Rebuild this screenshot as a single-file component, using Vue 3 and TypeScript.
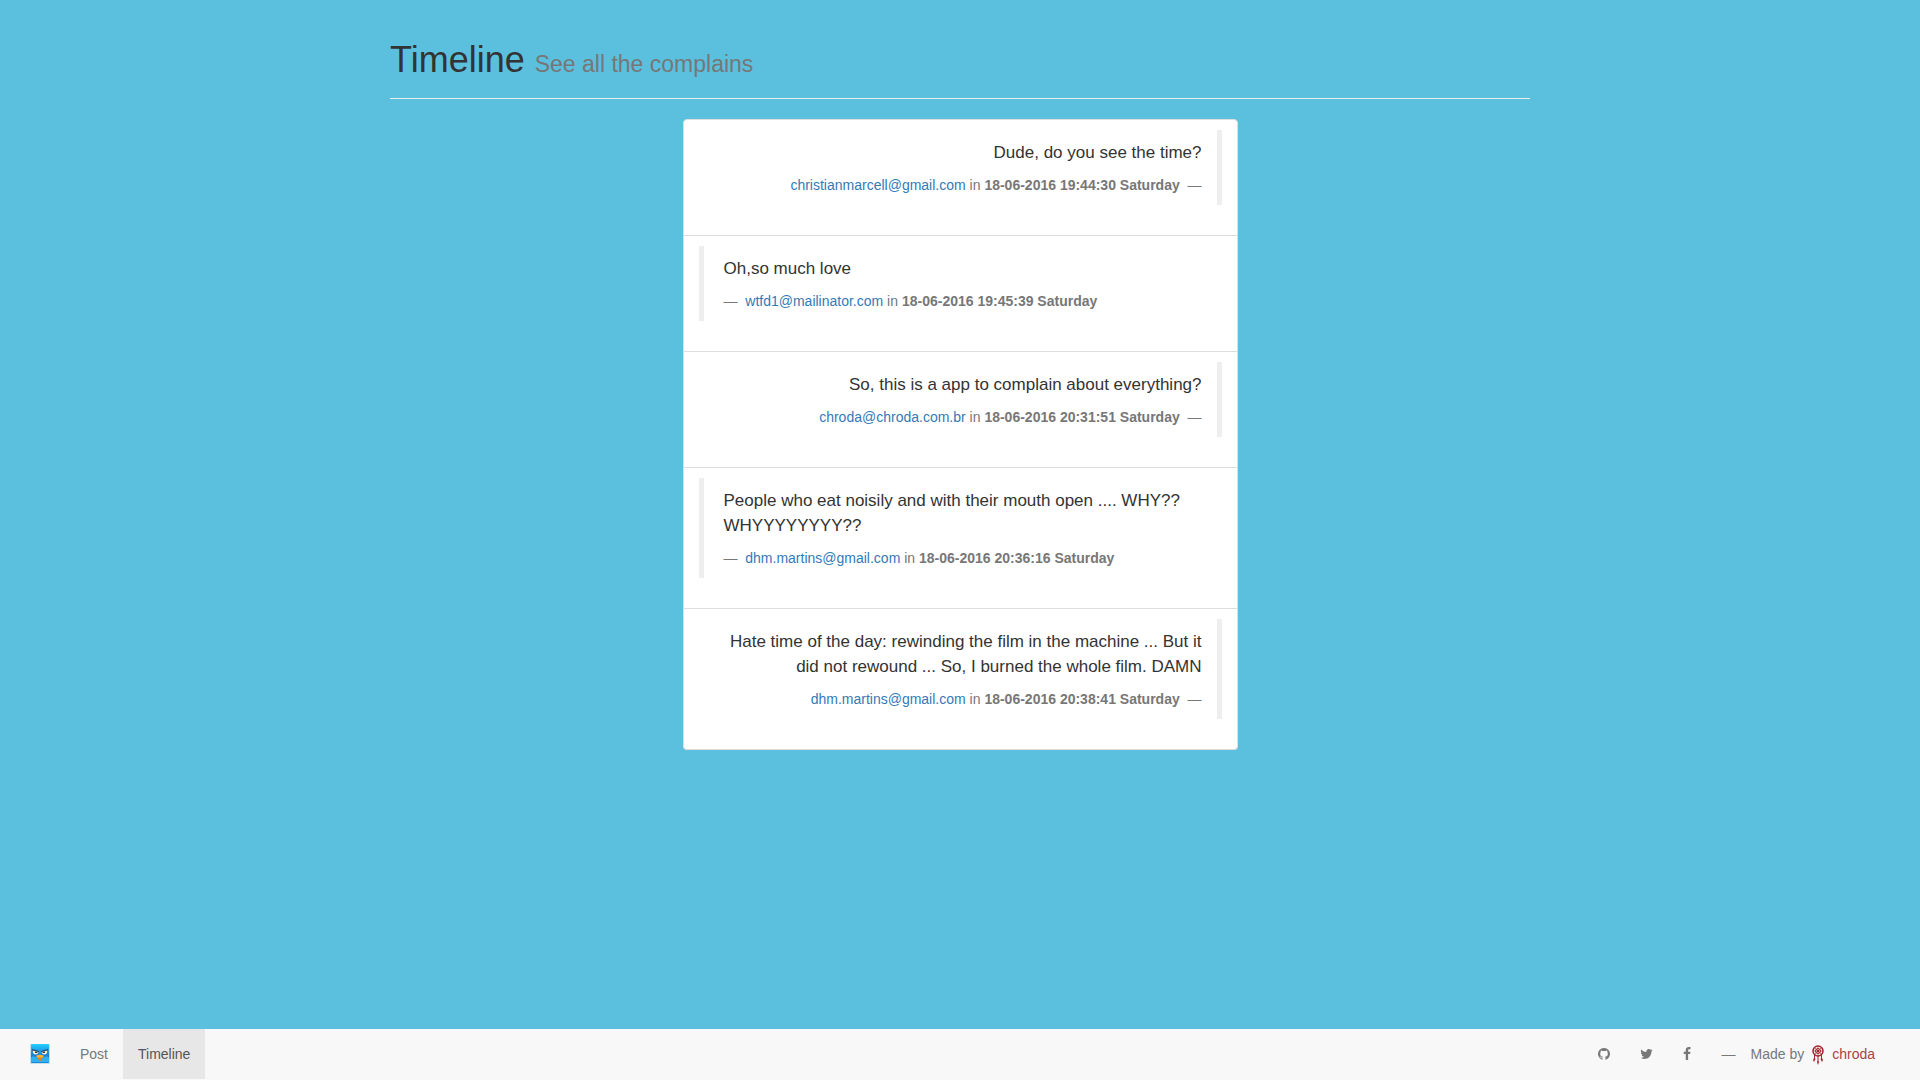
<script setup lang="ts">
interface Complaint {
  text: string
  email: string
  date: string
}

const complaints: Complaint[] = [
  { text: 'Dude, do you see the time?', email: 'christianmarcell@gmail.com', date: '18-06-2016 19:44:30 Saturday' },
  { text: 'Oh,so much love', email: 'wtfd1@mailinator.com', date: '18-06-2016 19:45:39 Saturday' },
  { text: 'So, this is a app to complain about everything?', email: 'chroda@chroda.com.br', date: '18-06-2016 20:31:51 Saturday' },
  { text: 'People who eat noisily and with their mouth open .... WHY?? WHYYYYYYYY??', email: 'dhm.martins@gmail.com', date: '18-06-2016 20:36:16 Saturday' },
  { text: 'Hate time of the day: rewinding the film in the machine ... But it did not rewound ... So, I burned the whole film. DAMN', email: 'dhm.martins@gmail.com', date: '18-06-2016 20:38:41 Saturday' },
]
</script>

<template>
  <div class="page">
    <main class="container">
      <header class="page-header">
        <h1>Timeline <small>See all the complains</small></h1>
      </header>
      <ul class="list">
        <li v-for="(item, i) in complaints" :key="i" class="item">
          <blockquote :class="{ reverse: i % 2 === 0 }">
            <p>{{ item.text }}</p>
            <footer>
              <a :href="'mailto:' + item.email">{{ item.email }}</a> in <strong>{{ item.date }}</strong>
            </footer>
          </blockquote>
        </li>
      </ul>
    </main>

    <nav class="navbar" aria-label="Main">
      <div class="group">
        <a class="brand" href="#" aria-label="Home">
          <svg width="20" height="20" viewBox="0 0 20 20" aria-hidden="true">
            <defs>
              <linearGradient id="sky" x1="0" y1="0" x2="0" y2="1">
                <stop offset="0" stop-color="#22d0fd" />
                <stop offset="0.3" stop-color="#1ea4ec" />
                <stop offset="0.6" stop-color="#1b7fd0" />
                <stop offset="1" stop-color="#1a8cda" />
              </linearGradient>
            </defs>
            <rect x="0" y="0" width="20" height="20" rx="1" fill="#c5dcea" />
            <rect x="1" y="0" width="18" height="19" rx="1" fill="url(#sky)" />
            <path d="M1 14 Q3 11 5 13 Q7 12 8 15 L12 15 Q13 12 15 13 Q17 11 19 14 V18 H1Z" fill="#2fb0f0" />
            <path d="M2 5 L9 7 V8 H2Z M18 5 L11 7 V8 H18Z" fill="#1a4f80" />
            <path d="M2.500 6.500 L8.500 8 Q8 10.500 5.500 10.500 Q3 10.500 2.500 6.500Z M17.500 6.500 L11.500 8 Q12 10.500 14.500 10.500 Q17 10.500 17.500 6.500Z" fill="#f3efcf" />
            <path d="M5 7.500 H7.500 V9 H5Z M12.500 7.500 H15 V9 H12.500Z" fill="#444" />
            <path d="M6 12 Q10 9.500 14 12 L11.500 15 L10 17.500 L8.500 15Z" fill="#f9b233" />
            <path d="M7 13 L10 14 L13 13 L10 17.500Z" fill="#dd7f16" />
          </svg>
        </a>
        <a class="link" href="#post">Post</a>
        <a class="link active" href="#timeline" aria-current="page">Timeline</a>
      </div>
      <div class="group right">
        <a class="link" href="#github" aria-label="GitHub">
          <svg width="12" height="14" viewBox="0 0 1536 1792" aria-hidden="true"><path transform="translate(0 1536) scale(1 -1)" d="M768 1408q209 0 385.500 -103t279.500 -279.500t103 -385.500q0 -251 -146.500 -451.500t-378.500 -277.500q-27 -5 -40 7t-13 30q0 3 0.500 76.500t0.500 134.500q0 97 -52 142q57 6 102.500 18t94 39t81 66.500t53 105t20.500 150.500q0 119 -79 206q37 91 -8 204q-28 9 -81 -11t-92 -44l-38 -24q-93 26 -192 26t-192 -26q-16 11 -42.500 27t-83.500 38.500t-85 13.500q-45 -113 -8 -204q-79 -87 -79 -206q0 -85 20.500 -150t52.500 -105t80.500 -67t94 -39t102.500 -18q-39 -36 -49 -103q-21 -10 -45 -15t-57 -5t-65.500 21.500t-55.500 62.500q-19 32 -48.500 52t-49.500 24l-20 3q-21 0 -29 -4.500t-5 -11.500t9 -14t13 -12l7 -5q22 -10 43.500 -38t31.500 -51l10 -23q13 -38 44 -61.500t67 -30t69.500 -7t55.500 3.500l23 4q0 -38 0.500 -88.500t0.500 -54.500q0 -18 -13 -30t-40 -7q-232 77 -378.500 277.500t-146.500 451.500q0 209 103 385.500t279.500 279.500t385.500 103z" /></svg>
        </a>
        <a class="link" href="#twitter" aria-label="Twitter">
          <svg width="13" height="14" viewBox="0 0 1664 1792" aria-hidden="true"><path transform="translate(0 1536) scale(1 -1)" d="M1620 1128q-67 -98 -162 -167q1 -14 1 -42q0 -130 -38 -259.500t-115.500 -248.500t-184.500 -210.500t-258 -146t-323 -54.500q-271 0 -496 145q35 -4 78 -4q225 0 401 138q-105 2 -188 64.500t-114 159.500q33 -5 61 -5q43 0 85 11q-112 23 -185.500 111.500t-73.500 205.500v4q68 -38 146 -41q-66 44 -105 115t-39 154q0 88 44 163q121 -149 294.500 -238.500t371.500 -99.500q-8 38 -8 74q0 134 94.500 228.500t228.500 94.500q140 0 236 -102q109 21 205 78q-37 -115 -142 -178q93 10 186 50z" /></svg>
        </a>
        <a class="link" href="#facebook" aria-label="Facebook">
          <svg width="8" height="14" viewBox="0 0 1024 1792" aria-hidden="true"><path transform="translate(0 1536) scale(1 -1)" d="M959 1524v-264h-157q-86 0 -116 -36t-30 -108v-189h293l-39 -296h-254v-759h-306v759h-255v296h255v218q0 186 104 288.500t277 102.500q147 0 228 -12z" /></svg>
        </a>
        <p class="credit"><span>—</span><span>Made by</span></p>
        <a class="author" href="#chroda">
          <svg width="12" height="22" viewBox="0 -2 12 22" aria-hidden="true">
            <g fill="none" stroke="#a3262e">
              <circle cx="6" cy="6" r="5" stroke-width="1.500" />
              <circle cx="6" cy="6" r="2.500" stroke-width="1" />
              <path d="M6 1V11M1 6H11M2.500 2.500L9.500 9.500M9.500 2.500L2.500 9.500" stroke-width="0.600" />
              <path d="M2.500 10V13M6 11V15M9.500 10V13" stroke-width="1" />
            </g>
            <circle cx="6" cy="6" r="1.300" fill="#a3262e" />
            <path d="M2.500 12L3.500 14L2 17L1 15Z M6 14L7 17L6 20L5 17Z M9.500 12L11 15L10 17L8.500 14Z" fill="#a3262e" />
          </svg>
          chroda
        </a>
      </div>
    </nav>
  </div>
</template>

<style>
body {
  margin: 0;
  background: #5bc0de;
}
</style>

<style scoped>
.page {
  color: #333;
  font: 14px/20px "Liberation Sans", Arial, sans-serif;
}
.page * {
  box-sizing: border-box;
}
a {
  color: #337ab7;
  text-decoration: none;
}
.container {
  max-width: 1170px;
  margin: 0 auto;
  padding: 40px 15px 70px;
}
.page-header {
  margin-bottom: 20px;
  padding-bottom: 18px;
  border-bottom: 1px solid #eee;
}
h1 {
  margin: 0;
  font-size: 36px;
  font-weight: 400;
  line-height: 40px;
}
h1 small {
  color: #777;
  font-size: 23px;
  line-height: 1;
}
.list {
  max-width: 555px;
  margin: 0 auto;
  padding: 0;
  list-style: none;
}
.item {
  padding: 10px 15px 30px;
  background: #fff;
  border: 1px solid #ddd;
  border-top-width: 0;
}
.item:first-child {
  border-top-width: 1px;
  border-radius: 4px 4px 0 0;
}
.item:last-child {
  border-radius: 0 0 4px 4px;
}
blockquote {
  margin: 0;
  padding: 10px 15px 10px 20px;
  border-left: 5px solid #eee;
}
blockquote.reverse {
  border-right: 5px solid #eee;
  border-left: 0;
  text-align: right;
}
blockquote p {
  margin: 0 0 10px;
  font-size: 17px;
  line-height: 25px;
}
blockquote footer {
  color: #777;
}
blockquote footer::before {
  content: "\2014 \00A0\00A0";
}
blockquote.reverse footer::before {
  content: "";
}
blockquote.reverse footer::after {
  content: "\00A0\00A0\2014";
}
.navbar {
  position: fixed;
  right: 0;
  bottom: 0;
  left: 0;
  display: flex;
  justify-content: space-between;
  padding: 0 15px;
  background: #f8f8f8;
  border-bottom: 1px solid #f8f8f8;
}
.group {
  display: flex;
  align-items: center;
}
.right {
  padding-right: 15px;
}
.brand,
.link {
  display: flex;
  align-items: center;
  height: 50px;
  padding: 0 15px;
  color: #777;
}
.active {
  background: #e7e7e7;
  color: #555;
}
.navbar svg {
  display: block;
  fill: currentColor;
}
.credit {
  display: flex;
  gap: 15px;
  margin: 0;
  padding: 0 8px 0 15px;
  color: #777;
}
.author {
  display: flex;
  align-items: center;
  gap: 8px;
  padding-right: 15px;
  color: #a94442;
}
</style>
